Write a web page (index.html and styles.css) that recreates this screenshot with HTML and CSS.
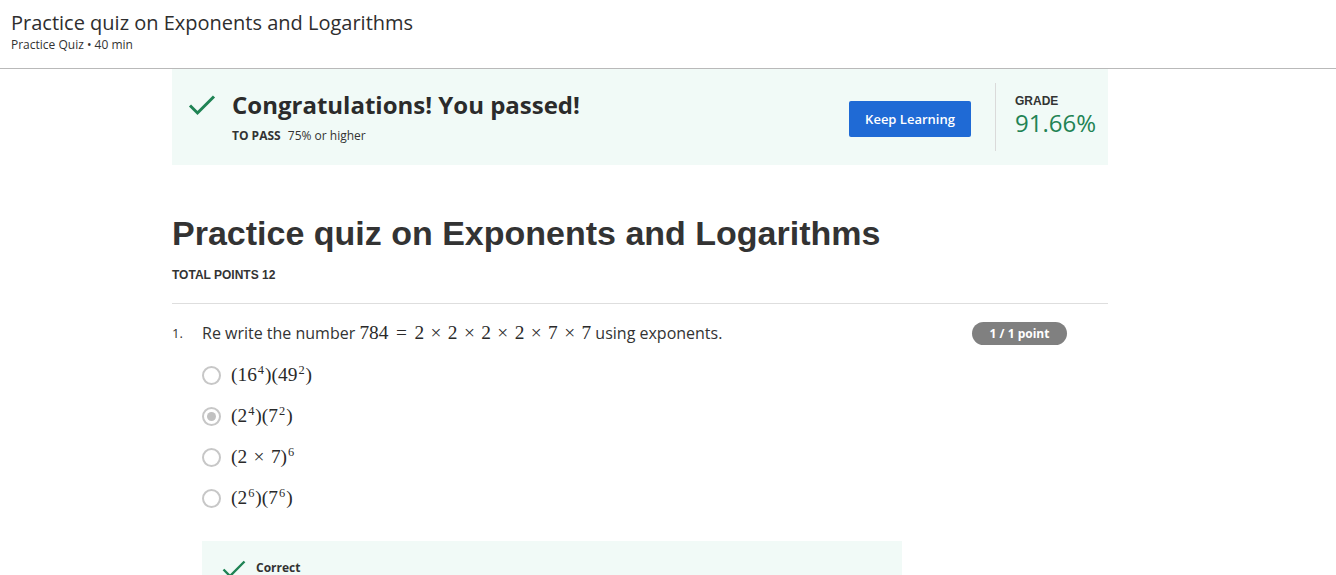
FILE: index.html
```html
<!DOCTYPE html>
<html>
<head>
<meta charset="utf-8">
<link rel="stylesheet" href="styles.css">
</head>
<body>
<header class="topbar">
  <div class="topbar-title">Practice quiz on Exponents and Logarithms</div>
  <div class="topbar-sub">Practice Quiz • 40 min</div>
</header>
<main class="main">
  <section class="banner">
    <div class="banner-left">
      <svg class="banner-check" width="28" height="22" viewBox="0 0 28 22"><path d="M2 11.5 L9.5 19 L26 2.5" fill="none" stroke="#1f8354" stroke-width="3"/></svg>
      <div class="banner-text">
        <div class="banner-title">Congratulations! You passed!</div>
        <div class="banner-pass"><span class="pass-label">TO PASS</span> 75% or higher</div>
      </div>
    </div>
    <div class="banner-right">
      <button class="btn">Keep Learning</button>
      <div class="divider"></div>
      <div class="grade">
        <div class="grade-label">GRADE</div>
        <div class="grade-value">91.66%</div>
      </div>
    </div>
  </section>

  <h1 class="quiz-title">Practice quiz on Exponents and Logarithms</h1>
  <div class="total">TOTAL POINTS 12</div>
  <hr class="rule">

  <div class="question">
    <div class="q-num">1.</div>
    <div class="q-body">
      <div class="q-head">
        <div class="q-text">Re write the number <span class="m">784<span class="rel">=</span>2<span class="bin">×</span>2<span class="bin">×</span>2<span class="bin">×</span>2<span class="bin">×</span>7<span class="bin">×</span>7</span> using exponents.</div>
        <span class="badge">1 / 1 point</span>
      </div>
      <div class="options">
        <div class="opt"><span class="radio"></span><span class="m">(16<sup>4</sup>)(49<sup>2</sup>)</span></div>
        <div class="opt"><span class="radio checked"></span><span class="m">(2<sup>4</sup>)(7<sup>2</sup>)</span></div>
        <div class="opt"><span class="radio"></span><span class="m">(2<span class="bin">×</span>7)<sup>6</sup></span></div>
        <div class="opt"><span class="radio"></span><span class="m">(2<sup>6</sup>)(7<sup>6</sup>)</span></div>
      </div>
      <div class="feedback">
        <svg class="fb-check" width="24" height="18" viewBox="0 0 24 18"><path d="M1.5 9.5 L8 16 L22.5 1.5" fill="none" stroke="#1f8354" stroke-width="2.4"/></svg>
        <span class="fb-text">Correct</span>
      </div>
    </div>
  </div>
</main>
</body>
</html>
```
FILE: styles.css
```css
* { box-sizing: border-box; }
html, body { margin: 0; padding: 0; background: #fff; overflow: hidden; }
body { font-family: "Open Sans", "Liberation Sans", sans-serif; color: #333; }

.topbar {
  height: 69px;
  border-bottom: 1px solid #b9b9b9;
  padding: 10px 11px 0;
}
.topbar-title { font-size: 20px; line-height: 26px; color: #2e2e2e; }
.topbar-sub { font-size: 12px; line-height: 18px; color: #333; }

.main { margin-left: 172px; width: 936px; }

.banner {
  height: 96px;
  background: #f1faf7;
  display: flex;
  justify-content: space-between;
  align-items: center;
  padding: 0 13px 0 16px;
}
.banner-left { display: flex; align-items: flex-start; }
.banner-check { margin-top: 5px; margin-right: 16px; }
.banner-title { font-size: 24px; font-weight: 700; line-height: 32px; color: #2b2b2b; }
.banner-pass { font-size: 12px; line-height: 18px; margin-top: 6px; color: #333; }
.pass-label { font-weight: 700; margin-right: 4px; }

.banner-right { display: flex; align-items: center; height: 100%; }
.btn {
  width: 122px; height: 36px;
  margin-top: 4px;
  background: #1f6ad5;
  border: none; border-radius: 2px;
  color: #fff;
  font-family: "Open Sans", sans-serif;
  font-size: 13px; font-weight: 600;
  padding: 0;
}
.divider { width: 1px; height: 68px; background: #dadada; margin: 0 19px 0 24px; }
.grade { width: 80px; margin-top: -4px; }
.grade-label { font-family: "Liberation Sans", Arial, sans-serif; font-size: 12px; font-weight: 700; color: #333; line-height: 14px; margin-bottom: 1px; }
.grade-value { font-size: 24px; color: #1f8354; line-height: 28px; }

.quiz-title {
  font-family: "Liberation Sans", Arial, sans-serif;
  font-size: 34px; font-weight: 700; color: #333;
  margin: 48px 0 0; line-height: 40px;
}
.total {
  font-family: "Liberation Sans", Arial, sans-serif;
  font-size: 12px; font-weight: 700; color: #333;
  margin-top: 15px; line-height: 14px;
}
.rule { border: none; border-top: 1px solid #dedede; margin: 21px 0 0; }

.question { display: flex; margin-top: 17px; }
.q-num { width: 30px; font-size: 13px; line-height: 24px; color: #333; }
.q-body { flex: 1; }
.q-head { display: flex; justify-content: space-between; align-items: center; }
.q-text { font-size: 16px; line-height: 24px; color: #333; }
.m { font-family: "Liberation Serif", "DejaVu Serif", serif; font-size: 19.4px; line-height: 24px; color: #2a2a2a; }
.m .bin { margin: 0 0.33em; }
.m .rel { margin: 0 0.385em; }
.m sup { font-size: 0.64em; vertical-align: 0; position: relative; top: -7px; margin: 0 1px; }
.badge {
  background: #808080; color: #fff;
  font-size: 12px; font-weight: 700;
  width: 95px; height: 23px; line-height: 23px; text-align: center;
  border-radius: 12px; margin-right: 41px;
}

.options { display: flex; flex-direction: column; gap: 17px; margin-top: 18px; }
.opt { display: flex; align-items: center; height: 24px; }
.opt .m { position: relative; top: 1px; }
.radio {
  width: 19px; height: 19px; border-radius: 50%;
  border: 2px solid #c7c7c7; margin-right: 10px; flex: none;
  display: flex; align-items: center; justify-content: center;
}
.radio.checked::after {
  content: ""; width: 9px; height: 9px; border-radius: 50%; background: #c1c1c1;
}

.feedback {
  width: 700px; height: 60px; margin-top: 31px;
  background: #f1faf7;
  display: flex; align-items: flex-start;
  padding: 18px 0 0 20px;
}
.fb-check { margin-top: 1px; margin-right: 10px; }
.fb-text { font-size: 12px; font-weight: 700; color: #333; line-height: 18px; }
```
